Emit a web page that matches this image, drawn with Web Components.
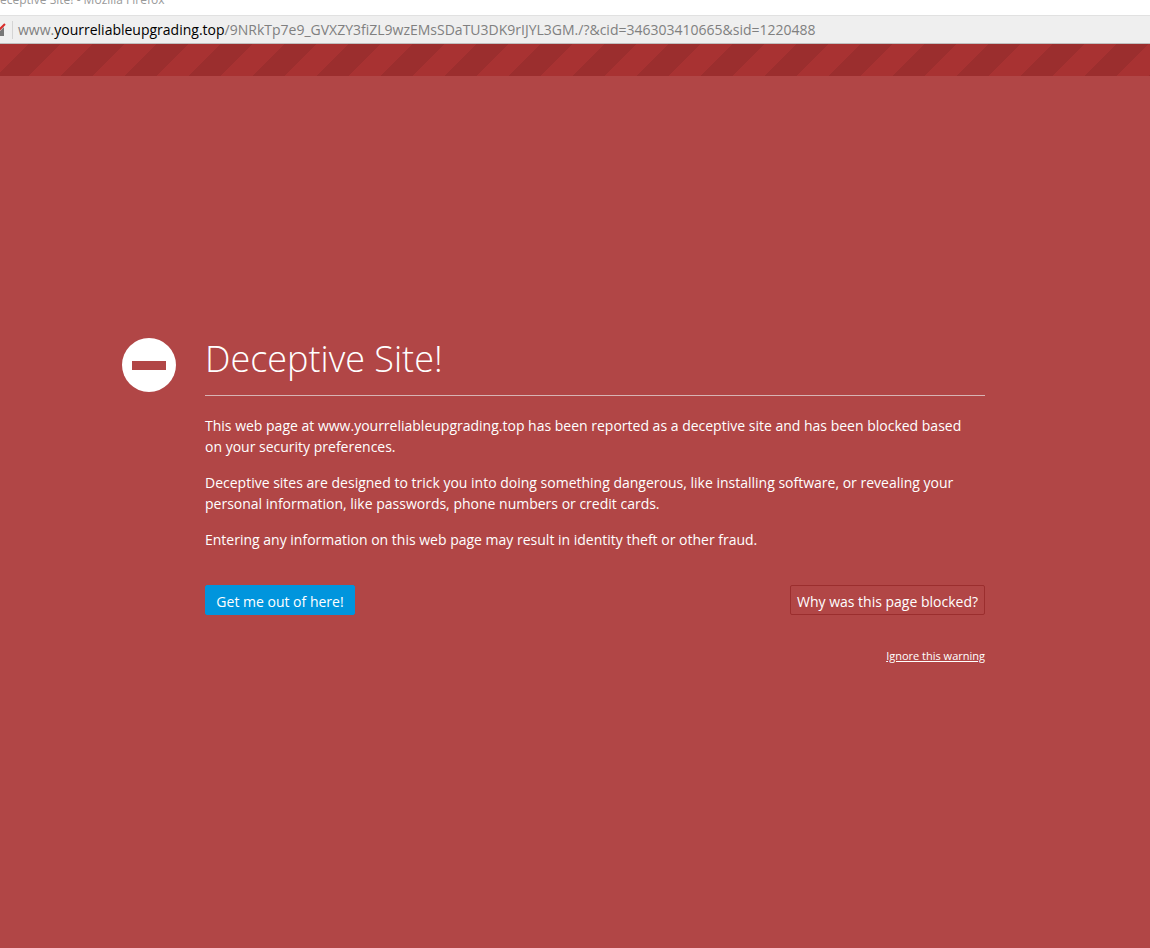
<!DOCTYPE html>
<html lang="en">
<head>
<meta charset="utf-8">
<title>Deceptive Site!</title>
<style>
  html,
  body {
    height: 100%;
    margin: 0;
  }
  body {
    display: flex;
    flex-direction: column;
    background: #b14646;
    font-family: "Open Sans", "Noto Sans", sans-serif;
  }
</style>
</head>
<body>
<window-title>eceptive Site! - Mozilla Firefox</window-title>
<address-bar>www.<b slot="domain">yourreliableupgrading.top</b><span slot="path">/9NRkTp7e9_GVXZY3fiZL9wzEMsSDaTU3DK9rIJYL3GM./?&amp;cid=346303410665&amp;sid=1220488</span></address-bar>
<blocked-page>
  <span slot="title">Deceptive Site!</span>
  <p>This web page at www.yourreliableupgrading.top has been reported as a deceptive site and has been blocked based on your security preferences.</p>
  <p>Deceptive sites are designed to trick you into doing something dangerous, like installing software, or revealing your personal information, like passwords, phone numbers or credit cards.</p>
  <p>Entering any information on this web page may result in identity theft or other fraud.</p>
  <page-button slot="actions" kind="primary">Get me out of here!</page-button>
  <page-button slot="actions">Why was this page blocked?</page-button>
  <a slot="ignore" href="#ignore">Ignore this warning</a>
</blocked-page>

<script>
  // Base class: each element only supplies its own markup and styles.
  class ShadowElement extends HTMLElement {
    constructor() {
      super();
      this.attachShadow({mode: 'open'});
      this.shadowRoot.innerHTML = this.constructor.template;
    }
  }

  /**
   * Caption of the window, partly scrolled out above the page.
   */
  class WindowTitle extends ShadowElement {
    static get template() {
      return `
        <style>
          :host {
            display: block;
            flex: none;
            height: 15px;
            overflow: hidden;
            background: #fff;
            color: #999;
            font-size: 12px;
            line-height: 0;
            white-space: nowrap;
          }
        </style>
        <slot></slot>
      `;
    }
  }

  /**
   * The address bar. The domain is passed in its own slot so that it can
   * stand out from the rest of the address.
   */
  class AddressBar extends ShadowElement {
    static get template() {
      return `
        <style>
          :host {
            display: flex;
            flex: none;
            align-items: center;
            height: 27px;
            border-top: 1px solid #e1e1e1;
            border-bottom: 1px solid #c0bfbf;
            background: #efefef;
            color: #808080;
            font-size: 14px;
            line-height: 20px;
            white-space: nowrap;
            overflow: hidden;
          }
          svg {
            flex: none;
          }
          .url {
            flex: 1;
            margin-left: 5px;
            outline: none;
          }
          ::slotted(b) {
            color: #000;
            font-weight: 400;
          }
        </style>
        <svg width="13" height="20" viewBox="0 0 13 20" aria-hidden="true">
          <path d="M0 7h4v9H0z" fill="#777"/>
          <path d="M-1 10 5 4" stroke="#efefef" stroke-width="3"/>
          <path d="M-1 10 5 4" stroke="#d92d2a" stroke-width="2"/>
          <path d="M12 1h1v18h-1z" fill="#d4d4d4"/>
        </svg>
        <div class="url" role="textbox" aria-label="Address" tabindex="0"><slot></slot><slot name="domain"></slot><slot name="path"></slot></div>
      `;
    }
  }

  /**
   * Button of the warning page, `kind="primary"` for the blue one.
   */
  class PageButton extends ShadowElement {
    static get template() {
      return `
        <style>
          :host {
            display: block;
          }
          button {
            box-sizing: border-box;
            min-width: 195px;
            height: 30px;
            padding: 2px 3px 0;
            border: 1px solid #9b2e2e;
            border-radius: 2px;
            background: none;
            color: #fff;
            font: inherit;
            white-space: nowrap;
            cursor: pointer;
          }
          :host([kind="primary"]) button {
            min-width: 150px;
            border-color: #0095dd;
            background: #0095dd;
          }
        </style>
        <button type="button"><slot></slot></button>
      `;
    }
  }

  /**
   * The warning page itself.
   */
  class BlockedPage extends ShadowElement {
    static get template() {
      return `
        <style>
          :host {
            display: flex;
            flex: 1;
            flex-direction: column;
            color: #fff;
            font-size: 14px;
            line-height: 21px;
          }
          .stripes {
            flex: none;
            height: 32px;
            background: linear-gradient(135deg, #9b2e2e 25%, #a83232 25% 50%, #9b2e2e 50% 75%, #a83232 75%) 28px 0 / 64px 64px;
          }
          main {
            display: flex;
            flex: 1;
            align-items: center;
            justify-content: center;
            padding: 0 43px 22px 0;
          }
          .container {
            display: grid;
            grid-template-columns: 54px 1fr;
            column-gap: 29px;
            width: 100%;
            max-width: 863px;
          }
          .icon {
            margin-top: 2px;
          }
          h1 {
            margin: 0 0 19px;
            padding-bottom: 13px;
            border-bottom: 1px solid #d8b4b4;
            font-size: 36px;
            font-weight: 300;
            line-height: 46px;
          }
          ::slotted(p) {
            margin: 0 0 15px;
            padding-right: 8px;
          }
          .actions {
            display: flex;
            justify-content: space-between;
            margin-top: 35px;
          }
          .ignore {
            margin-top: 29px;
            text-align: right;
          }
          ::slotted(a) {
            color: #fff;
            font-size: 11px;
          }
        </style>
        <div class="stripes"></div>
        <main>
          <div class="container">
            <svg class="icon" width="54" height="54" viewBox="0 0 54 54" aria-hidden="true">
              <circle cx="27" cy="27" r="27" fill="#fff"/>
              <path d="M10 23h34v9H10z" fill="#b14646"/>
            </svg>
            <div>
              <h1><slot name="title"></slot></h1>
              <slot></slot>
              <div class="actions"><slot name="actions"></slot></div>
              <div class="ignore"><slot name="ignore"></slot></div>
            </div>
          </div>
        </main>
      `;
    }
  }

  customElements.define('window-title', WindowTitle);
  customElements.define('address-bar', AddressBar);
  customElements.define('page-button', PageButton);
  customElements.define('blocked-page', BlockedPage);
</script>
</body>
</html>
